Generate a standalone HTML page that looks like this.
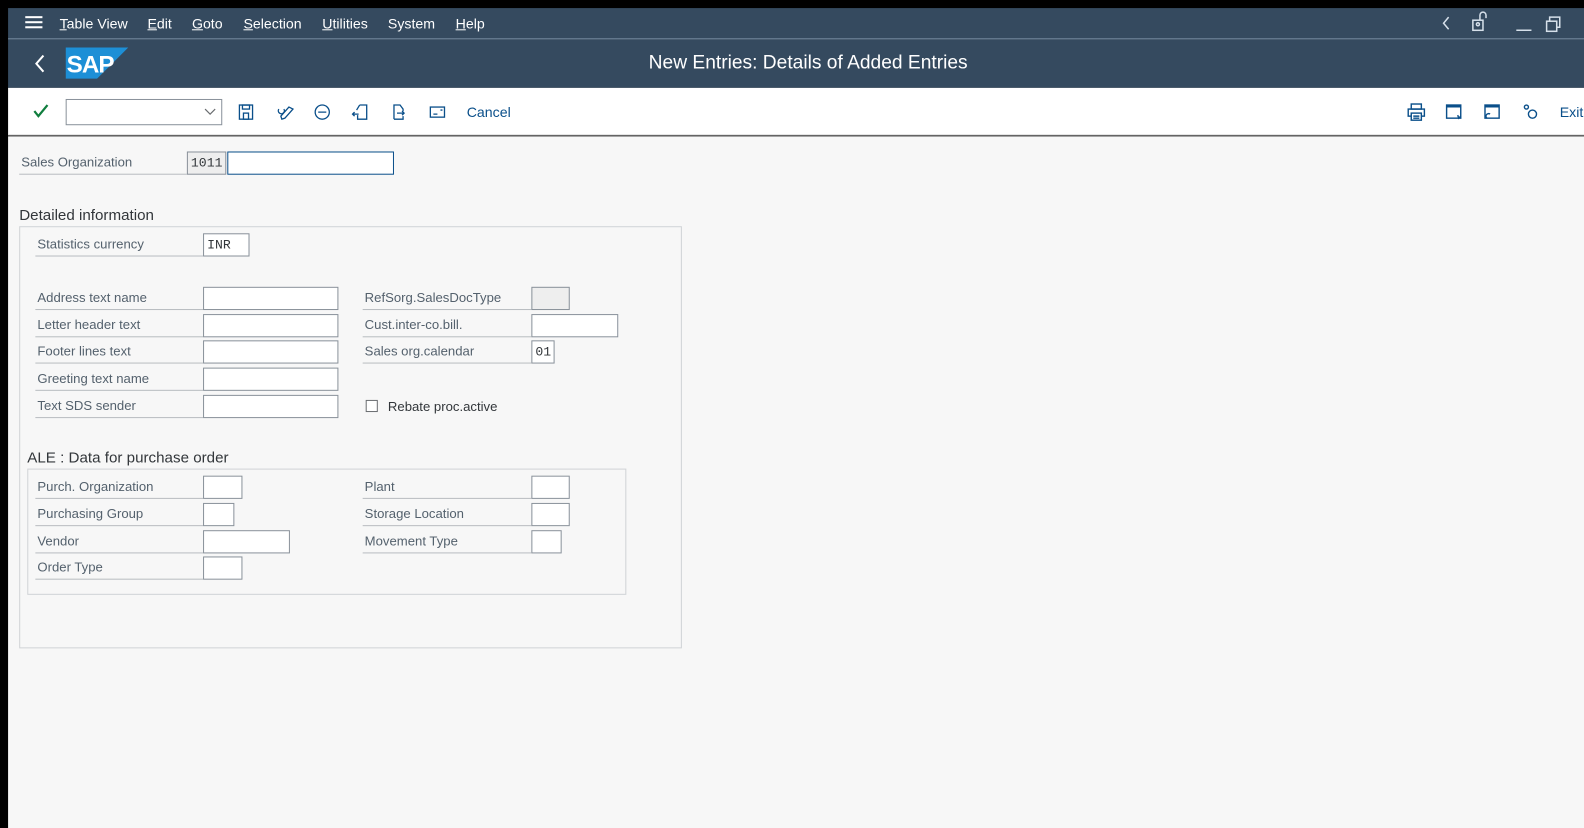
<!DOCTYPE html>
<html><head><meta charset="utf-8"><style>
*{box-sizing:border-box;margin:0;padding:0}
body{width:1584px;height:820px;background:#000;font-family:"Liberation Sans",sans-serif;position:relative;overflow:hidden}
#wrap{position:absolute;left:0;top:0;width:1568px;height:812px;transform:scale(1.0102,1.0099);transform-origin:0 0}
.a{position:absolute}
#menu{left:8px;top:8px;width:1576px;height:31px;background:#354a5f;border-bottom:1px solid #7f93a8}
#title{left:8px;top:39px;width:1576px;height:48px;background:#354a5f}
#tool{left:8px;top:87px;width:1576px;height:47px;background:#fff;border-bottom:1px solid #d9d9d9}
#body{left:8px;top:135px;width:1576px;height:685px;background:#f7f7f7}
.m{color:#fff;font-size:14px;top:15px}
.m u{text-decoration:underline}
.lb{font-size:13px;border-bottom:1px solid #b8bcc0;height:23px;line-height:22px;padding-left:2px;color:#54616d}
.f{background:#fff;border:1px solid #89919a;height:23px;font-family:"Liberation Mono",monospace;font-size:13px;color:#32363a;line-height:21px;padding-left:3px}
.g{background:#eee}
.h{font-size:15px;color:#32363a}
.box{border:1px solid #d0d3d6}
</style></head><body><div id="wrap">
<div id="menu" class="a"></div>
<div class="a" style="left:25px;top:16px;width:17px;height:2px;background:#fff;box-shadow:0 5px 0 #fff,0 10px 0 #fff"></div>
<div class="a m" style="left:59px"><u>T</u>able View</div>
<div class="a m" style="left:146px"><u>E</u>dit</div>
<div class="a m" style="left:190px"><u>G</u>oto</div>
<div class="a m" style="left:241px"><u>S</u>election</div>
<div class="a m" style="left:319px"><u>U</u>tilities</div>
<div class="a m" style="left:384px">System</div>
<div class="a m" style="left:451px"><u>H</u>elp</div>
<svg class="a" style="left:1420px;top:10px" width="164" height="28" fill="none" stroke="#d6e0ea" stroke-width="1.5">
<path d="M14 7l-5 6 5 6"/>
<rect x="38" y="10" width="10" height="10"/><path d="M45 10V5a3 3 0 016 0v3"/><circle cx="43" cy="14" r="1.5"/>
<path d="M81 20h15"/>
<rect x="111" y="11" width="10" height="10"/><path d="M114 11V7h10v10h-3"/>
<path d="M157 8l7 8M164 8l-7 8"/>
</svg>
<div id="title" class="a"></div>
<svg class="a" style="left:30px;top:52px" width="20" height="22" fill="none" stroke="#fff" stroke-width="2"><path d="M13 3l-7 8 7 8"/></svg>
<svg class="a" style="left:65px;top:47px" width="62" height="31"><polygon points="0,0 62,0 31,31 0,31" fill="#1d8fd6"/><text x="1" y="25" font-family="Liberation Sans" font-weight="bold" font-size="24" letter-spacing="-1" fill="#fff">SAP</text></svg>
<div class="a" style="left:0;width:1600px;top:52px;text-align:center;color:#fff;font-size:19px">New Entries: Details of Added Entries</div>
<div id="tool" class="a"></div>
<svg class="a" style="left:32px;top:102px" width="18" height="16" fill="none" stroke="#107e3e" stroke-width="2.2"><path d="M2 8l4 5 9-11"/></svg>
<div class="a" style="left:65px;top:98px;width:155px;height:26px;border:1px solid #89919a;background:#fff"></div>
<svg class="a" style="left:200px;top:104px" width="16" height="14" fill="none" stroke="#6a6d70" stroke-width="1.2"><path d="M3 4l5 5 5-5"/></svg>
<svg class="a" style="left:232px;top:100px" width="280" height="22" fill="none" stroke="#0a4f8a" stroke-width="1.3">
<rect x="5" y="4" width="13" height="14"/><rect x="8" y="4" width="7" height="4"/><rect x="9" y="12" width="5" height="6"/>
<path d="M54 6l-8 9 1 3 3-1 8-9zM44 8a3 3 0 105 0"/>
<circle cx="87" cy="11" r="7"/><path d="M83 11h8"/>
<path d="M124 4h7v14h-9v-4M124 4l-3 5M117 13h6M119 11l-2 2 2 2"/>
<path d="M158 18V4h6l3 4v2M158 18h9v-3M161 12h7M166 10l2 2-2 2"/>
<rect x="194" y="6" width="14" height="10"/><path d="M197 13h4M204 9h2"/>
</svg>
<div class="a" style="left:462px;top:103px;font-size:14px;color:#0a4f8a">Cancel</div>
<svg class="a" style="left:1390px;top:100px" width="140" height="22" fill="none" stroke="#0a4f8a" stroke-width="1.4">
<rect x="7" y="3" width="10" height="5"/><rect x="4" y="8" width="16" height="7"/><rect x="7" y="12" width="10" height="7" fill="#fff"/><path d="M9 15h6M9 17h6"/>
<rect x="42" y="4" width="14" height="13"/><path d="M42 5h14" stroke-width="3"/><path d="M53 14l1 3 2-2" />
<rect x="80" y="4" width="14" height="13"/><path d="M80 5h14" stroke-width="3"/><path d="M82 17a2 2 0 013-4"/>
<circle cx="127" cy="13" r="4"/><circle cx="121" cy="6" r="2"/>
</svg>
<div class="a" style="left:1544px;top:103px;font-size:14px;color:#0a4f8a">Exit</div>
<div id="body" class="a"></div>

<div class="a lb" style="left:19px;top:150px;width:166px">Sales Organization</div>
<div class="a f g" style="left:185px;top:150px;width:39px">1011</div>
<div class="a f" style="left:225px;top:150px;width:165px;border-color:#0a4f8a"></div>

<div class="a h" style="left:19px;top:205px">Detailed information</div>
<div class="a box" style="left:19px;top:224px;width:656px;height:418px"></div>

<div class="a lb" style="left:35px;top:231px;width:166px">Statistics currency</div>
<div class="a f" style="left:201px;top:231px;width:46px">INR</div>

<div class="a lb" style="left:35px;top:284px;width:166px">Address text name</div>
<div class="a f" style="left:201px;top:284px;width:134px"></div>
<div class="a lb" style="left:35px;top:311px;width:166px">Letter header text</div>
<div class="a f" style="left:201px;top:311px;width:134px"></div>
<div class="a lb" style="left:35px;top:337px;width:166px">Footer lines text</div>
<div class="a f" style="left:201px;top:337px;width:134px"></div>
<div class="a lb" style="left:35px;top:364px;width:166px">Greeting text name</div>
<div class="a f" style="left:201px;top:364px;width:134px"></div>
<div class="a lb" style="left:35px;top:391px;width:166px">Text SDS sender</div>
<div class="a f" style="left:201px;top:391px;width:134px"></div>

<div class="a lb" style="left:359px;top:284px;width:167px">RefSorg.SalesDocType</div>
<div class="a f g" style="left:526px;top:284px;width:38px"></div>
<div class="a lb" style="left:359px;top:311px;width:167px">Cust.inter-co.bill.</div>
<div class="a f" style="left:526px;top:311px;width:86px"></div>
<div class="a lb" style="left:359px;top:337px;width:167px">Sales org.calendar</div>
<div class="a f" style="left:526px;top:337px;width:23px">01</div>
<div class="a" style="left:362px;top:396px;width:12px;height:12px;border:1px solid #6a6d70;background:#fff"></div>
<div class="a" style="left:384px;top:395px;font-size:13px;color:#32363a">Rebate proc.active</div>

<div class="a h" style="left:27px;top:445px">ALE : Data for purchase order</div>
<div class="a box" style="left:27px;top:464px;width:593px;height:125px"></div>
<div class="a lb" style="left:35px;top:471px;width:166px">Purch. Organization</div>
<div class="a f" style="left:201px;top:471px;width:39px"></div>
<div class="a lb" style="left:35px;top:498px;width:166px">Purchasing Group</div>
<div class="a f" style="left:201px;top:498px;width:31px"></div>
<div class="a lb" style="left:35px;top:525px;width:166px">Vendor</div>
<div class="a f" style="left:201px;top:525px;width:86px"></div>
<div class="a lb" style="left:35px;top:551px;width:166px">Order Type</div>
<div class="a f" style="left:201px;top:551px;width:39px"></div>
<div class="a lb" style="left:359px;top:471px;width:167px">Plant</div>
<div class="a f" style="left:526px;top:471px;width:38px"></div>
<div class="a lb" style="left:359px;top:498px;width:167px">Storage Location</div>
<div class="a f" style="left:526px;top:498px;width:38px"></div>
<div class="a lb" style="left:359px;top:525px;width:167px">Movement Type</div>
<div class="a f" style="left:526px;top:525px;width:30px"></div>
</div></body></html>
